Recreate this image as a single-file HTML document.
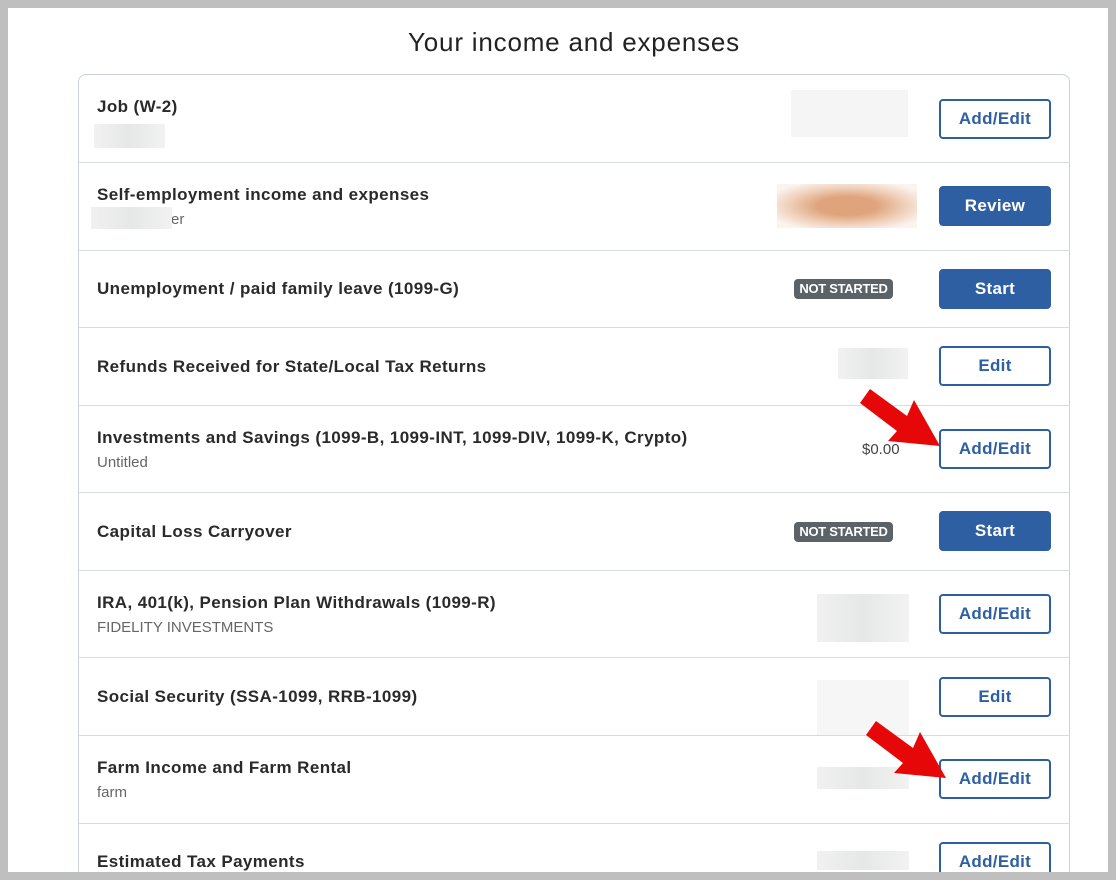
<!DOCTYPE html>
<html><head><meta charset="utf-8"><style>
*{margin:0;padding:0;box-sizing:border-box}
body{width:1116px;height:880px;background:#bfbfbf;position:relative;overflow:hidden;font-family:"Liberation Sans",sans-serif}
.page{position:absolute;left:8px;top:8px;width:1100px;height:864px;background:#fff;overflow:hidden}
h1{position:absolute;left:0;width:1132px;top:19px;text-align:center;font-weight:normal;font-size:26px;color:#222;letter-spacing:.8px}
.card{position:absolute;left:70px;top:66px;width:992px;height:900px;border:1px solid #c9d2db;border-radius:8px}
.sep{position:absolute;left:70px;width:992px;height:1px;background:#d4dbe2}
.t{position:absolute;left:89px;font-size:17px;font-weight:bold;color:#2a2a2a;white-space:nowrap;letter-spacing:.4px}
.s{position:absolute;left:89px;font-size:15px;color:#666;white-space:nowrap}
.btn{position:absolute;left:931px;width:112px;height:40px;border:2px solid #2f5fa3;border-radius:4px;color:#2f5fa3;font-size:17px;font-weight:bold;text-align:center;line-height:36px;background:#fff;letter-spacing:.3px}
.fill{background:#2f5fa3;color:#fff}
.badge{position:absolute;left:786px;width:99px;height:20px;background:#5b6268;border-radius:4px;color:#fff;font-size:13px;font-weight:bold;text-align:center;line-height:20px;letter-spacing:-.3px}
.blur{position:absolute;background:linear-gradient(90deg,#f1f1f1,#e6e7e7,#f2f2f2)}
</style></head><body>
<div class="page">
<h1>Your income and expenses</h1>
<div class="card"></div>
<div class="sep" style="top:154px"></div><div class="sep" style="top:242px"></div><div class="sep" style="top:319px"></div><div class="sep" style="top:397px"></div><div class="sep" style="top:484px"></div><div class="sep" style="top:562px"></div><div class="sep" style="top:649px"></div><div class="sep" style="top:727px"></div><div class="sep" style="top:815px"></div>

<div class="t" style="top:89px">Job (W-2)</div>
<div class="blur" style="left:86px;top:116px;width:71px;height:24px"></div>
<div class="blur" style="left:783px;top:82px;width:117px;height:47px;background:#f5f5f5"></div>
<div class="btn" style="top:91px">Add/Edit</div>

<div class="t" style="top:177px">Self-employment income and expenses</div>
<div class="s" style="top:203px;left:163px">er</div>
<div class="blur" style="left:83px;top:199px;width:81px;height:22px"></div>
<div style="position:absolute;left:769px;top:176px;width:140px;height:44px;background:radial-gradient(ellipse at center,#dfa47c 30%,#f0d2bd 60%,#fbf3ee 85%)"></div>
<div class="btn fill" style="top:178px">Review</div>

<div class="t" style="top:271px">Unemployment / paid family leave (1099-G)</div>
<div class="badge" style="top:271px">NOT STARTED</div>
<div class="btn fill" style="top:261px">Start</div>

<div class="t" style="top:349px">Refunds Received for State/Local Tax Returns</div>
<div class="blur" style="left:830px;top:340px;width:70px;height:31px"></div>
<div class="btn" style="top:338px">Edit</div>

<div class="t" style="top:420px">Investments and Savings (1099-B, 1099-INT, 1099-DIV, 1099-K, Crypto)</div>
<div class="s" style="top:446px">Untitled</div>
<div class="s" style="top:433px;left:854px;color:#444">$0.00</div>
<div class="btn" style="top:421px">Add/Edit</div>

<div class="t" style="top:514px">Capital Loss Carryover</div>
<div class="badge" style="top:514px">NOT STARTED</div>
<div class="btn fill" style="top:503px">Start</div>

<div class="t" style="top:585px">IRA, 401(k), Pension Plan Withdrawals (1099-R)</div>
<div class="s" style="top:611px">FIDELITY INVESTMENTS</div>
<div class="blur" style="left:809px;top:586px;width:92px;height:48px"></div>
<div class="btn" style="top:586px">Add/Edit</div>

<div class="t" style="top:679px">Social Security (SSA-1099, RRB-1099)</div>
<div class="blur" style="left:809px;top:672px;width:92px;height:55px;background:#f6f6f6"></div>
<div class="btn" style="top:669px">Edit</div>

<div class="t" style="top:750px">Farm Income and Farm Rental</div>
<div class="s" style="top:776px">farm</div>
<div class="blur" style="left:809px;top:759px;width:92px;height:22px"></div>
<div class="btn" style="top:751px">Add/Edit</div>

<div class="t" style="top:844px">Estimated Tax Payments</div>
<div class="blur" style="left:809px;top:843px;width:92px;height:19px"></div>
<div class="btn" style="top:834px">Add/Edit</div>
</div>
<svg width="1116" height="880" style="position:absolute;left:0;top:0">
<defs><polygon id="ar" points="876,721 913,748 920,732 946,778 894,773 903,763 866,735"/></defs>
<use href="#ar" fill="#e60808" transform="translate(-6,-332)"/>
<use href="#ar" fill="#e60808"/>
</svg>
</body></html>
